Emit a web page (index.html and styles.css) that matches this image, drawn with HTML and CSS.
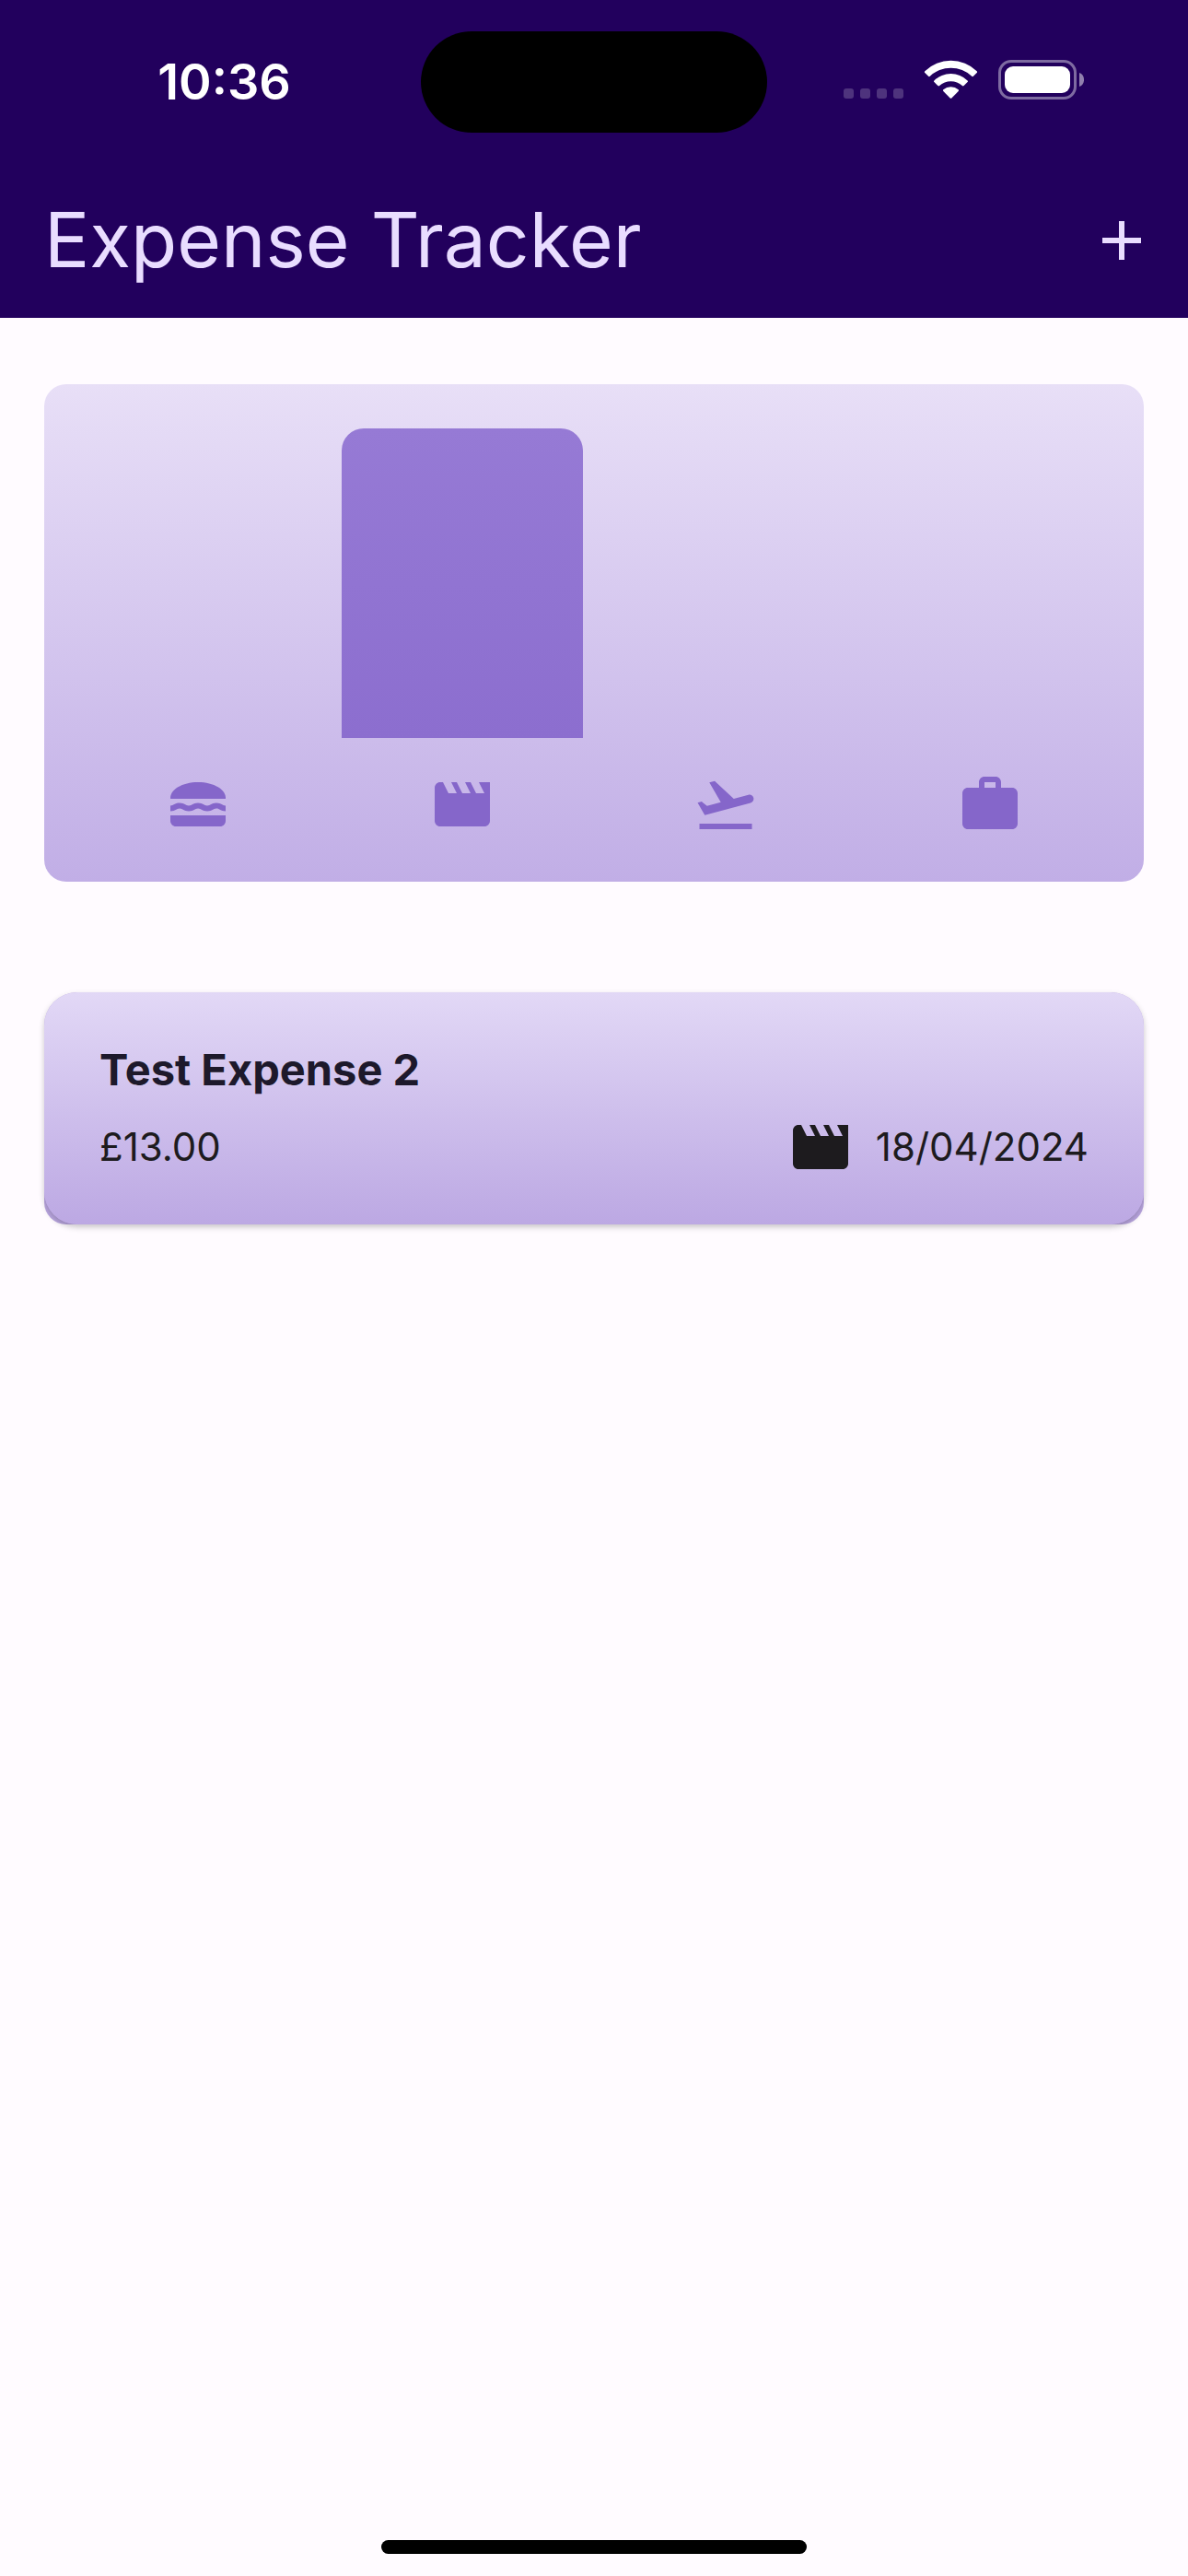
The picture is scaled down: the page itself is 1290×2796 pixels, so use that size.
FILE: index.html
```html
<!DOCTYPE html>
<html lang="en">
<head>
<meta charset="utf-8">
<meta name="viewport" content="width=device-width, initial-scale=1">
<title>Expense Tracker</title>
<link rel="stylesheet" href="styles.css">
</head>
<body>
<svg class="sprite" aria-hidden="true">
  <symbol id="icon-movie" viewBox="0 0 24 24"><path d="M18 4l2 4h-3l-2-4h-2l2 4h-3l-2-4H8l2 4H7L5 4H4c-1.1 0-1.99.9-1.99 2L2 18c0 1.1.9 2 2 2h16c1.1 0 2-.9 2-2V4h-4z"/></symbol>
</svg>
<header class="top">
  <div class="status-bar">
    <time class="clock">10:36</time>
    <div class="island"></div>
    <svg class="indicators" width="261" height="47" viewBox="0 0 261 47" role="img" aria-label="Wi-Fi on, battery full">
      <g fill="#fff" fill-opacity=".2">
        <rect x="0" y="31" width="11" height="11" rx="3"/>
        <rect x="18" y="31" width="11" height="11" rx="3"/>
        <rect x="36" y="31" width="11" height="11" rx="3"/>
        <rect x="54" y="31" width="11" height="11" rx="3"/>
      </g>
      <g fill="#fff">
        <path d="M88.300 12.300a40.500 40.500 0 0 1 56.400 0q.8.9 0 1.700l-3.800 3.800q-.8.800-1.700 0a33 33 0 0 0-45.400 0q-.9.800-1.700 0l-3.800-3.800q-.8-.8 0-1.700z"/>
        <path d="M98.400 22.400a26 26 0 0 1 36.200 0q.8.900 0 1.700l-4 4q-.9.800-1.700 0a18.200 18.200 0 0 0-24.800 0q-.8.800-1.700 0l-4-4q-.8-.8 0-1.700z"/>
        <path d="M108.300 32.200a12.500 12.500 0 0 1 16.400 0q.8.800 0 1.700l-7.400 7.500q-.8.800-1.600 0l-7.400-7.500q-.8-.9 0-1.700z"/>
        <rect x="175" y="7" width="71" height="29" rx="9"/>
      </g>
      <rect x="169.500" y="1.500" width="82" height="40" rx="12.500" fill="none" stroke="#fff" stroke-opacity=".42" stroke-width="3"/>
      <path d="M256 14c6.700 2 6.700 13 0 15z" fill="#fff" fill-opacity=".5"/>
    </svg>
  </div>
  <div class="app-bar">
    <h1 class="title">Expense Tracker</h1>
    <button class="add" type="button" aria-label="Add expense">
      <svg class="icon" viewBox="0 0 24 24"><path d="M19 13h-6v6h-2v-6H5v-2h6V5h2v6h6v2z"/></svg>
    </button>
  </div>
</header>
<main class="content">
  <section class="chart" aria-label="Spending by category">
    <div class="bars">
      <div class="bar" style="height: 0%"></div>
      <div class="bar" style="height: 100%"></div>
      <div class="bar" style="height: 0%"></div>
      <div class="bar" style="height: 0%"></div>
    </div>
    <div class="categories">
      <svg class="icon" viewBox="0 0 24 24" role="img" aria-label="Food"><path d="M22 10c.32-3.280-4.280-6-9.990-6S1.700 6.720 2.020 10H22z"/><path d="M18.660 11.500c-1.950 0-2.090 1-3.330 1-1.190 0-1.420-1-3.330-1-1.950 0-2.090 1-3.330 1-1.190 0-1.420-1-3.330-1-1.950 0-2.150.95-3.340 1v2c1.900 0 2.170-1 3.350-1 1.190 0 1.420 1 3.330 1 1.950 0 2.090-1 3.330-1 1.190 0 1.420 1 3.330 1 1.950 0 2.090-1 3.330-1 1.190 0 1.420.95 3.330 1v-2c-1.190 0-1.430-1-3.340-1z"/><path d="M2 16v2c0 1.100.9 2 2 2h16c1.100 0 2-.9 2-2v-2H2z"/></svg>
      <svg class="icon" role="img" aria-label="Leisure"><use href="#icon-movie"/></svg>
      <svg class="icon" viewBox="0 0 24 24" role="img" aria-label="Travel"><path d="M2.500 19h19v2h-19v-2zm19.570-9.360c-.21-.8-1.040-1.280-1.840-1.060L14.920 10l-6.900-6.430-1.930.51 4.140 7.170-4.970 1.330-1.970-1.540-1.450.39 1.820 3.160.77 1.330 1.600-.43 5.310-1.420 4.350-1.160L21 11.490c.81-.23 1.280-1.050 1.070-1.850z"/></svg>
      <svg class="icon" viewBox="0 0 24 24" role="img" aria-label="Work"><path d="M20 6h-4V4c0-1.110-.89-2-2-2h-4c-1.110 0-2 .89-2 2v2H4c-1.110 0-1.990.89-1.990 2L2 19c0 1.110.89 2 2 2h16c1.110 0 2-.89 2-2V8c0-1.110-.89-2-2-2zm-6 0h-4V4h4v2z"/></svg>
    </div>
  </section>
  <ul class="expenses">
    <li class="expense">
      <article class="card">
        <h2 class="name">Test Expense 2</h2>
        <div class="details">
          <span class="amount">£13.00</span>
          <svg class="icon" role="img" aria-label="Leisure"><use href="#icon-movie"/></svg>
          <time datetime="2024-04-18">18/04/2024</time>
        </div>
      </article>
    </li>
  </ul>
</main>
<footer class="home"><div class="home-indicator"></div></footer>
</body>
</html>
```
FILE: styles.css
```css
* {
  box-sizing: border-box;
}

body {
  margin: 0;
  min-height: 100vh;
  display: flex;
  flex-direction: column;
  background: #fffbff;
  color: #1d1b1e;
  font-family: Inter, "Liberation Sans", sans-serif;
  font-optical-sizing: none;
}

.sprite {
  display: none;
}

.icon {
  display: block;
  width: 72px;
  height: 72px;
  fill: currentColor;
}

.top {
  background: #22005d;
  color: #e9ddff;
}

.status-bar {
  display: grid;
  grid-template-columns: 1fr 376px 1fr;
  align-items: center;
  justify-items: center;
  height: 177px;
  color: #fff;
}

.clock {
  padding-left: 30px;
  font-size: 54px;
  font-weight: 600;
  line-height: 72px;
}

.island {
  width: 100%;
  height: 110px;
  border-radius: 55px;
  background: #000;
}

.indicators {
  box-sizing: content-box;
  padding-right: 30px;
}

.app-bar {
  display: flex;
  align-items: center;
  justify-content: space-between;
  height: 168px;
  padding-left: 48px;
}

.title {
  margin: 0;
  font-size: 82px;
  font-weight: 400;
  line-height: 108px;
}

.add {
  display: grid;
  place-items: center;
  width: 144px;
  height: 144px;
  padding: 0;
  border: 0;
  background: none;
  color: inherit;
}

.content {
  flex: 1;
  padding: 72px 48px;
}

.chart {
  padding: 48px 24px;
  border-radius: 24px;
  background: linear-gradient(#e8dff7, #c1aee6);
}

.bars,
.categories {
  display: grid;
  grid-template-columns: repeat(4, 1fr);
}

.bars {
  align-items: end;
  height: 336px;
  margin-bottom: 36px;
}

.bar {
  margin: 0 12px;
  border-radius: 24px 24px 0 0;
  background: linear-gradient(#967ad5, #8c6ecf);
}

.categories {
  justify-items: center;
  color: #8566ca;
}

.expenses {
  margin: 120px 0 0;
  padding: 0;
  list-style: none;
}

.expense {
  border-radius: 36px 36px 24px 24px;
  background: #bca8e3;
}

.card {
  padding: 48px 60px;
  border-radius: 36px;
  background: linear-gradient(#e2d8f6, #bca8e3);
  box-shadow: 0 3px 6px rgba(0, 0, 0, 0.22);
}

.name {
  margin: 0 0 12px;
  color: #1d192b;
  font-size: 47px;
  font-weight: 700;
  line-height: 72px;
}

.details {
  display: flex;
  align-items: center;
  gap: 24px;
  font-size: 42px;
  line-height: 72px;
}

.amount {
  flex: 1;
}

.home {
  display: flex;
  justify-content: center;
  padding-bottom: 24px;
}

.home-indicator {
  width: 462px;
  height: 15px;
  border-radius: 8px;
  background: #000;
}
```
